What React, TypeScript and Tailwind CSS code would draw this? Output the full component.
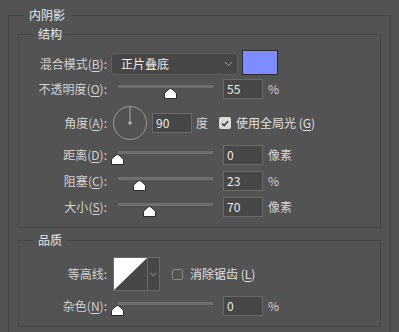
import React from "react";

const FONT = { fontFamily: '"Noto Sans CJK SC", "Noto Sans", sans-serif' };

function Mn({ pre, k, post = ":" }: { pre: string; k: string; post?: string }) {
  return (
    <span>
      {pre}(<span className="underline underline-offset-2">{k}</span>){post}
    </span>
  );
}

function Label({ children }: { children: React.ReactNode }) {
  return (
    <div className="w-[88px] shrink-0 text-right text-[12px] leading-none text-[#d2d2d2]">
      {children}
    </div>
  );
}

function Thumb() {
  return (
    <svg width="13" height="11" viewBox="0 0 13 11">
      <path
        d="M6.5 0.5 C7.6 0.5 12.5 4.8 12.5 6 L12.5 10.5 L0.5 10.5 L0.5 6 C0.5 4.8 5.4 0.5 6.5 0.5 Z"
        fill="#ffffff"
        stroke="#2a2a2a"
      />
    </svg>
  );
}

function Slider({ pos }: { pos: number }) {
  return (
    <div className="relative ml-[11px] h-[20px] w-[95px] shrink-0">
      <div className="absolute left-0 right-0 top-[6px] h-[3px] bg-[#6f6f6f]" />
      <div className="absolute top-[9px]" style={{ left: pos - 6 }}>
        <Thumb />
      </div>
    </div>
  );
}

function NumBox({ value, className = "" }: { value: string; className?: string }) {
  return (
    <div
      className={`flex h-[20px] w-[40px] shrink-0 items-center border border-[#6a6a6a] bg-[#474747] pl-[3px] text-[12px] leading-none text-[#ececec] ${className}`}
    >
      {value}
    </div>
  );
}

function SliderRow({
  label,
  pos,
  value,
  unit,
  className = "",
}: {
  label: React.ReactNode;
  pos: number;
  value: string;
  unit: string;
  className?: string;
}) {
  return (
    <div className={`flex h-[20px] items-center ${className}`}>
      <Label>{label}</Label>
      <Slider pos={pos} />
      <NumBox value={value} className="ml-[10px]" />
      <span className="ml-[5px] text-[12px] leading-none text-[#d2d2d2]">{unit}</span>
    </div>
  );
}

function Legend({ children, ml, pr }: { children: React.ReactNode; ml: string; pr: string }) {
  return (
    <legend className={`${ml} ${pr} pl-[5px] text-[12px] leading-[16px] text-[#e8e8e8]`}>
      {children}
    </legend>
  );
}

export default function App() {
  return (
    <div className="h-[332px] w-[399px] overflow-hidden bg-[#535353] pt-[7px]" style={FONT}>
      <fieldset className="ml-[8px] w-[383px] border border-[#454545] px-[9px] pb-[12px] pt-[3px]">
        <Legend ml="ml-[6px]" pr="pr-[7px]">
          内阴影
        </Legend>

        <fieldset className="border border-[#454545] pb-[10px] pt-[9px]">
          <Legend ml="ml-[14px]" pr="pr-[3px]">
            结构
          </Legend>

          <div className="flex h-[26px] items-center">
            <Label>
              <Mn pre="混合模式" k="B" />
            </Label>
            <div className="ml-[4px] flex h-[22px] w-[127px] items-center justify-between rounded-[3px] border border-[#5f5f5f] bg-[#474747] pl-[9px] pr-[4px] text-[12px] leading-none text-[#ececec]">
              <span>正片叠底</span>
              <svg width="9" height="6" viewBox="0 0 9 6">
                <path d="M1 1 L4.5 4.5 L8 1" fill="none" stroke="#9c9c9c" strokeWidth="1" />
              </svg>
            </div>
            <div className="ml-[4px] mt-[-3px] h-[25px] w-[36px] border border-[#2b2b2b] bg-[#7f8cff]" />
          </div>

          <SliderRow
            className="mt-[2px]"
            label={<Mn pre="不透明度" k="O" />}
            pos={52}
            value="55"
            unit="%"
          />

          <div className="mt-[6px] flex h-[36px] items-center">
            <Label>
              <Mn pre="角度" k="A" />
            </Label>
            <svg className="ml-[5px] shrink-0" width="36" height="36" viewBox="0 0 36 36">
              <circle cx="18" cy="18" r="16.5" fill="none" stroke="#9a9a9a" strokeWidth="1" />
              <line x1="18" y1="2" x2="18" y2="18" stroke="#a8a8a8" strokeWidth="1" />
              <circle cx="18" cy="18" r="1.8" fill="#b0b0b0" />
            </svg>
            <NumBox value="90" className="ml-[4px]" />
            <span className="ml-[4px] text-[12px] leading-none text-[#d2d2d2]">度</span>
            <div className="ml-[11px] flex h-[12px] w-[12px] items-center justify-center rounded-[2px] bg-[#d9d9d9]">
              <svg width="8" height="7" viewBox="0 0 8 7">
                <path d="M1 3.5 L3.2 5.6 L7 1.2" fill="none" stroke="#3a3a3a" strokeWidth="1.6" />
              </svg>
            </div>
            <span className="ml-[5px] text-[12px] leading-none text-[#e0e0e0]">
              使用全局光 (<span className="underline underline-offset-2">G</span>)
            </span>
          </div>

          <SliderRow className="mt-[4px]" label={<Mn pre="距离" k="D" />} pos={-1} value="0" unit="像素" />
          <SliderRow className="mt-[6px]" label={<Mn pre="阻塞" k="C" />} pos={21} value="23" unit="%" />
          <SliderRow className="mt-[6px]" label={<Mn pre="大小" k="S" />} pos={31} value="70" unit="像素" />
        </fieldset>

        <fieldset className="mt-[4px] border border-[#454545] pb-[10px] pt-[9px]">
          <Legend ml="ml-[14px]" pr="pr-[5px]">
            品质
          </Legend>

          <div className="flex h-[34px] items-center">
            <Label>等高线:</Label>
            <div className="ml-[6px] flex h-[34px] border border-[#6a6a6a]">
              <svg width="33" height="32" viewBox="0 0 33 32" className="block">
                <rect width="33" height="32" fill="#474747" />
                <polygon points="0,0 33,0 0,32" fill="#ffffff" />
              </svg>
              <div className="flex w-[12px] items-center justify-center border-l border-[#6a6a6a] bg-[#474747]">
                <svg width="7" height="5" viewBox="0 0 7 5">
                  <path d="M0.5 0.8 L3.5 3.8 L6.5 0.8" fill="none" stroke="#9c9c9c" />
                </svg>
              </div>
            </div>
            <div className="ml-[12px] h-[11px] w-[11px] rounded-[2px] border border-[#8a8a8a]" />
            <span className="ml-[7px] text-[12px] leading-none text-[#e0e0e0]">
              消除锯齿 (<span className="underline underline-offset-2">L</span>)
            </span>
          </div>

          <SliderRow className="mt-[5px]" label={<Mn pre="杂色" k="N" />} pos={-1} value="0" unit="%" />
        </fieldset>
      </fieldset>
    </div>
  );
}
